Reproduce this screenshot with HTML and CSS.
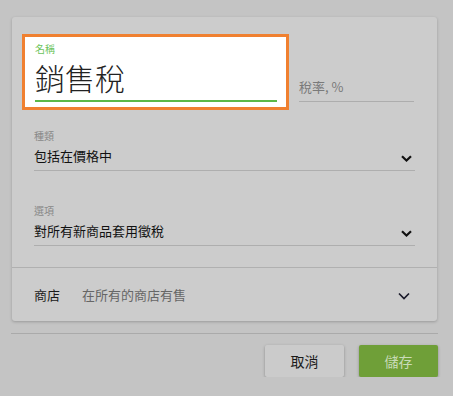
FILE: index.html
```html
<!DOCTYPE html>
<html lang="zh-Hant">
<head>
<meta charset="utf-8">
<link rel="stylesheet" href="styles.css">
</head>
<body>
<div class="page">
  <div class="card">
    <div class="top-row">
      <div class="name-box">
        <div class="name-label">名稱</div>
        <div class="name-input">銷售稅</div>
      </div>
      <div class="rate-field">稅率, %</div>
    </div>
    <div class="fields">
      <div class="field">
        <div class="field-label">種類</div>
        <div class="field-value">
          <span>包括在價格中</span>
          <svg class="chev" width="11" height="7" viewBox="0 0 11 7"><path d="M1 1.2 L5.5 5.5 L10 1.2" fill="none" stroke="#111" stroke-width="2.2"/></svg>
        </div>
      </div>
      <div class="field field-2">
        <div class="field-label">選項</div>
        <div class="field-value">
          <span>對所有新商品套用徵稅</span>
          <svg class="chev" width="11" height="7" viewBox="0 0 11 7"><path d="M1 1.2 L5.5 5.5 L10 1.2" fill="none" stroke="#111" stroke-width="2.2"/></svg>
        </div>
      </div>
    </div>
    <div class="store-row">
      <span class="store-label">商店</span>
      <span class="store-value">在所有的商店有售</span>
      <svg class="chev-thin" width="12" height="8" viewBox="0 0 12 8"><path d="M1 1.5 L6 6.5 L11 1.5" fill="none" stroke="#1a1a2a" stroke-width="1.7"/></svg>
    </div>
  </div>
  <div class="separator"></div>
  <div class="actions">
    <button class="btn btn-cancel">取消</button>
    <button class="btn btn-save">儲存</button>
  </div>
</div>
</body>
</html>
```
FILE: styles.css
```css
html, body {
  margin: 0;
  padding: 0;
  background: #c4c4c4;
  font-family: "Noto Sans CJK TC", "Noto Sans", sans-serif;
}
.page {
  width: 427px;
  margin-left: 11px;
  padding-top: 17px;
}
.card {
  margin: 0 1px;
  background: #cccccc;
  border-radius: 3px;
  box-shadow: 0 1px 3px rgba(0,0,0,0.22);
  padding-top: 17px;
  height: 304px;
  box-sizing: border-box;
}
.top-row {
  display: flex;
  padding-left: 10px;
  gap: 10px;
}
.name-box {
  width: 267px;
  height: 76px;
  box-sizing: border-box;
  border: 3px solid #f08030;
  background: #ffffff;
  padding: 6px 9px 4px 10px;
}
.name-label {
  font-size: 10px;
  line-height: 12px;
  color: #6cc45c;
}
.name-input {
  margin-top: 5px;
  font-size: 30px;
  font-weight: 300;
  line-height: 35px;
  color: #222;
  padding-bottom: 5px;
  border-bottom: 2px solid #5cb848;
}
.rate-field {
  align-self: flex-end;
  margin-bottom: 8px;
  width: 115px;
  font-size: 13px;
  line-height: 20px;
  color: #7a7a7a;
  padding-bottom: 4px;
  border-bottom: 1px solid #adadad;
}
.fields {
  padding: 19px 22px 0 22px;
}
.field-2 {
  margin-top: 33px;
}
.field-label {
  font-size: 10px;
  line-height: 14px;
  color: #888;
}
.field-value {
  display: flex;
  justify-content: space-between;
  align-items: center;
  font-size: 13px;
  line-height: 20px;
  color: #111;
  padding: 3px 0 4px;
  border-bottom: 1px solid #aeaeae;
}
.chev {
  margin-right: 3px;
  margin-top: 5px;
}
.store-row {
  margin-top: 21px;
  border-top: 1px solid #b0b0b0;
  height: 53px;
  display: flex;
  align-items: center;
  padding: 0 27px 0 22px;
  font-size: 13px;
}
.store-label {
  width: 48px;
  color: #1a1a1a;
  margin-top: -1px;
}
.store-value {
  flex: 1;
  color: #666;
  margin-top: -1px;
}
.chev-thin {
  margin-top: 3px;
}
.separator {
  margin-top: 12px;
  height: 1px;
  background: #aaaaaa;
}
.actions {
  display: flex;
  justify-content: flex-end;
  gap: 15px;
  margin-top: 11px;
}
.btn {
  width: 79px;
  height: 32px;
  border: none;
  border-radius: 2px;
  font-family: "Noto Sans CJK TC", "Noto Sans", sans-serif;
  font-size: 14px;
  box-shadow: 0 1px 3px rgba(0,0,0,0.3);
  padding: 0;
}
.btn-cancel {
  background: #cbcbcb;
  color: #1a1a1a;
}
.btn-save {
  background: #6f9f38;
  color: #c9dbb8;
}
```
